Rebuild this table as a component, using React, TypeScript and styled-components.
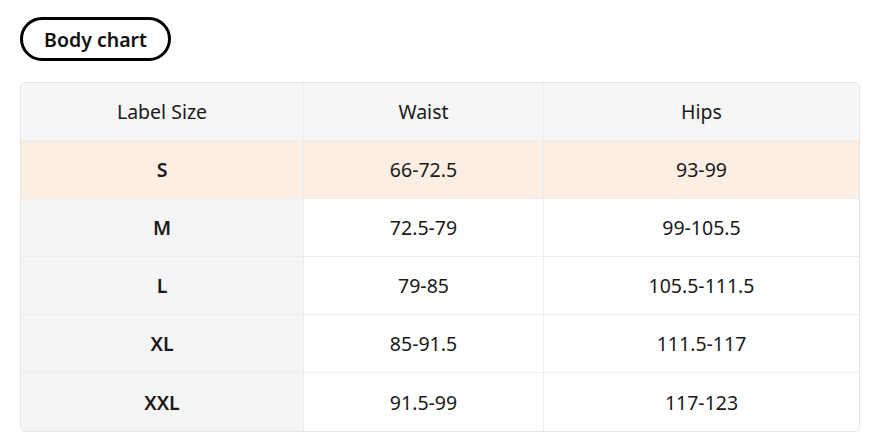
import React from "react";
import styled, { createGlobalStyle } from "styled-components";

const Global = createGlobalStyle`
  html, body { margin: 0; padding: 0; background: #ffffff; }
  body { font-family: "Noto Sans", "Open Sans", sans-serif; color: #1a1a1a; }
`;

const Page = styled.div`
  padding: 17px 22px 0 20px;
  display: flex;
  flex-direction: column;
  align-items: flex-start;
  gap: 21px;
`;

const Pill = styled.button`
  box-sizing: border-box;
  height: 44px;
  width: 151px;
  padding: 0;
  border: 3px solid #000;
  border-radius: 22px;
  background: #fff;
  font-family: "Noto Sans", "Open Sans", sans-serif;
  font-weight: 600;
  font-size: 19.5px;
  color: #111;
  cursor: pointer;
`;

const Table = styled.div`
  box-sizing: border-box;
  width: 840px;
  border: 1px solid #e6e6e6;
  border-radius: 5px;
  overflow: hidden;
  display: grid;
  grid-template-columns: 283px 240px 1fr;
`;

const Cell = styled.div<{ $bg: string; $bold?: boolean; $last?: boolean; $lastRow?: boolean }>`
  height: 58px;
  box-sizing: border-box;
  display: flex;
  align-items: center;
  justify-content: center;
  background: ${(p) => p.$bg};
  border-right: ${(p) => (p.$last ? "none" : "1px solid #ececec")};
  border-bottom: ${(p) => (p.$lastRow ? "none" : "1px solid #ececec")};
  font-size: 19.5px;
  font-weight: ${(p) => (p.$bold ? 600 : 400)};
  color: #1a1a1a;
`;

const header = ["Label Size", "Waist", "Hips"];
const rows = [
  ["S", "66-72.5", "93-99"],
  ["M", "72.5-79", "99-105.5"],
  ["L", "79-85", "105.5-111.5"],
  ["XL", "85-91.5", "111.5-117"],
  ["XXL", "91.5-99", "117-123"],
];

export default function App() {
  return (
    <>
      <Global />
      <Page>
        <Pill>Body chart</Pill>
        <Table>
          {header.map((h, i) => (
            <Cell key={h} $bg="#f6f6f7" $last={i === 2}>
              {h}
            </Cell>
          ))}
          {rows.map((r, ri) =>
            r.map((c, ci) => (
              <Cell
                key={`${ri}-${ci}`}
                $bg={ri === 0 ? "#fdeee3" : ci === 0 ? "#f5f5f5" : "#ffffff"}
                $bold={ci === 0}
                $last={ci === 2}
                $lastRow={ri === rows.length - 1}
              >
                {c}
              </Cell>
            ))
          )}
        </Table>
      </Page>
    </>
  );
}
